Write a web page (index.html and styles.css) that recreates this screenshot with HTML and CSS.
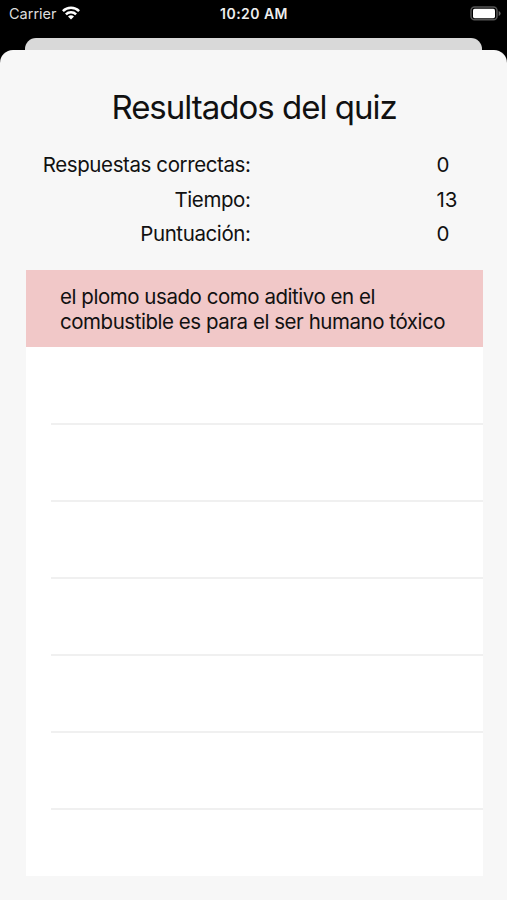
FILE: index.html
```html
<!DOCTYPE html>
<html lang="es">
<head>
<meta charset="utf-8">
<title>Resultados del quiz</title>
<link rel="stylesheet" href="styles.css">
</head>
<body>
<header class="status">
  <div class="carrier"><span>Carrier</span>
    <svg class="wifi" viewBox="0 0 18 14" width="18" height="14"><g fill="none" stroke="#fff" stroke-width="2.5"><path d="M.9 5.1a11.5 11.5 0 0 1 16.2 0"/><path d="M3.9 8.3a7.2 7.2 0 0 1 10.2 0"/></g><path fill="#fff" d="M6 10.6a4.3 4.3 0 0 1 6 0L9 13.6z"/></svg>
  </div>
  <time class="clock">10:20 AM</time>
  <svg class="battery" viewBox="0 0 31 15" width="31" height="15"><rect x="1" y="1" width="26" height="12.8" rx="3.5" fill="none" stroke="#555" stroke-width="1.5"/><rect x="3" y="2.8" width="22" height="9.4" rx="1.6" fill="#fff"/><path d="M28.7 5a2.6 2.6 0 0 1 0 5z" fill="#666"/></svg>
</header>
<div class="back-card"></div>
<main class="sheet">
  <h1 class="title">Resultados del quiz</h1>
  <dl class="stats">
    <dt>Respuestas correctas:</dt><dd>0</dd>
    <dt>Tiempo:</dt><dd>13</dd>
    <dt>Puntuación:</dt><dd>0</dd>
  </dl>
  <ul class="list">
    <li class="row wrong"><p class="answer">el plomo usado como aditivo en el<br>combustible es para el ser humano tóxico</p></li>
    <li class="row"></li>
    <li class="row"></li>
    <li class="row"></li>
    <li class="row"></li>
    <li class="row"></li>
    <li class="row"></li>
  </ul>
</main>
</body>
</html>
```
FILE: styles.css
```css
* { box-sizing: border-box; }
body {
  margin: 0;
  height: 900px;
  overflow: hidden;
  display: flex;
  flex-direction: column;
  background: #000;
  color: #111;
  font-family: Inter, "Liberation Sans", sans-serif;
}
.status {
  height: 38px;
  flex: none;
  display: grid;
  grid-template-columns: 1fr auto 1fr;
  align-items: start;
  padding: 5px 6px 0 9px;
  color: #eee;
  font-size: 14.5px;
  line-height: 18px;
}
.carrier { display: flex; gap: 5px; color: #ddd; }
.wifi { margin-top: 1px; }
.clock {
  font-weight: 600;
  font-size: 14px;
  letter-spacing: .45px;
  margin-left: -2px;
}
.battery { justify-self: end; margin-top: 1px; }
.back-card {
  height: 12px;
  flex: none;
  margin: 0 25px;
  background: #d9d9d9;
  border-radius: 11px 11px 0 0;
}
.sheet {
  flex: 1;
  background: #f7f7f7;
  border-radius: 13px 13px 0 0;
  padding: 35px 24.5px 24px 25.5px;
}
.title {
  margin: 0;
  height: 44px;
  line-height: 44px;
  text-align: center;
  font-size: 33px;
  font-weight: 400;
  letter-spacing: -1px;
}
.stats {
  margin: 18px 0 0;
  display: grid;
  grid-template-columns: 225px 1fr;
  column-gap: 186px;
  grid-auto-rows: 34.7px;
  line-height: 35px;
  font-size: 20.5px;
}
.stats dt { text-align: right; letter-spacing: -.4px; }
.stats dd { margin: 0; }
.list {
  margin: 19px 0 0;
  padding: 0;
  height: 606px;
  list-style: none;
  background: #fff;
}
.row {
  height: 77px;
  display: flex;
  justify-content: flex-end;
}
.row::after {
  content: "";
  align-self: flex-end;
  width: 432px;
  height: 2px;
  margin-bottom: -1px;
  background: #f0f0f0;
}
.wrong { background: #f1c8c8; padding: 15px 0 0 34.5px; justify-content: flex-start; }
.wrong::after { display: none; }
.answer {
  margin: 0;
  font-size: 20.5px;
  line-height: 24.5px;
  letter-spacing: -.46px;
  white-space: nowrap;
}
```
